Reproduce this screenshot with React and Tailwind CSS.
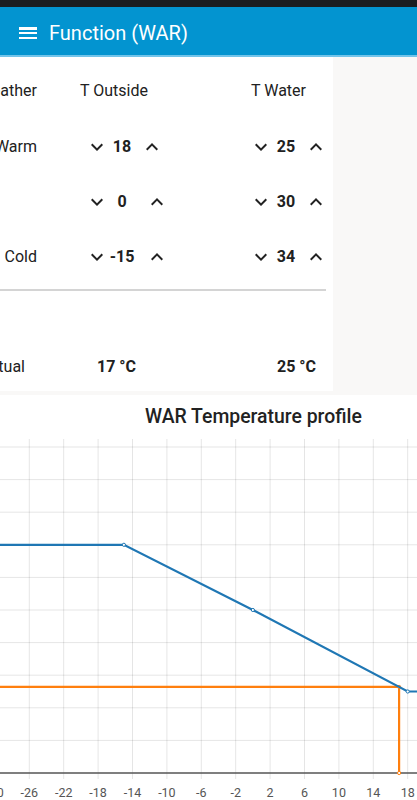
import React from "react";

const ChevDown = () => (
  <svg width="24" height="24" viewBox="0 0 24 24" className="shrink-0">
    <path d="M16.59 8.59L12 13.17 7.41 8.59 6 10l6 6 6-6z" fill="#222" />
  </svg>
);
const ChevUp = () => (
  <svg width="24" height="24" viewBox="0 0 24 24" className="shrink-0">
    <path d="M12 8l-6 6 1.41 1.41L12 10.83l4.59 4.58L18 14z" fill="#222" />
  </svg>
);

const tx = (t) => 29.3 + (t + 26) * 8.6;
const ty = (w) => 334 - (w - 20) * 16.3;

function Chart() {
  const vx = [];
  for (let k = -1; k <= 11; k++) vx.push(29.3 + 34.4 * k);
  const hy = [];
  for (let n = 1; n <= 10; n++) hy.push(334 - 32.6 * n);
  const labels = [-30, -26, -22, -18, -14, -10, -6, -2, 2, 6, 10, 14, 18];
  const blue = [
    [-40, ty(34)],
    [tx(-15), ty(34)],
    [tx(0), ty(30)],
    [tx(18), ty(25)],
    [440, ty(25)],
  ];
  const oy = ty(25.28);
  const ox = tx(17);
  return (
    <svg width="417" height="361" viewBox="0 0 417 361" className="block">
      {vx.map((x, i) => (
        <line key={"v" + i} x1={x} x2={x} y1={0} y2={340} stroke="rgba(0,0,0,0.1)" strokeWidth="1" />
      ))}
      {hy.map((y, i) => (
        <line key={"h" + i} x1={0} x2={417} y1={y} y2={y} stroke="rgba(0,0,0,0.1)" strokeWidth="1" />
      ))}
      <line x1={0} x2={417} y1={334} y2={334} stroke="#555" strokeWidth="1.5" />
      {labels.map((l, i) => (
        <text
          key={"l" + i}
          x={29.3 + 34.4 * (i - 1)}
          y={358}
          textAnchor="middle"
          fontSize="12.5"
          fill="#555"
          fontFamily="Roboto, sans-serif"
        >
          {l}
        </text>
      ))}
      <polyline
        points={`-10,${oy} ${ox},${oy} ${ox},334`}
        fill="none"
        stroke="#ff7f0e"
        strokeWidth="2.2"
      />
      <circle cx={ox} cy={oy} r="1.6" fill="#fff" stroke="#ff7f0e" strokeWidth="1" />
      <circle cx={ox} cy={334} r="1.6" fill="#fff" stroke="#ff7f0e" strokeWidth="1" />
      <polyline
        points={blue.map((p) => p.join(",")).join(" ")}
        fill="none"
        stroke="#1f77b4"
        strokeWidth="2.2"
      />
      {blue.slice(1, 4).map((p, i) => (
        <circle key={"p" + i} cx={p[0]} cy={p[1]} r="1.6" fill="#fff" stroke="#1f77b4" strokeWidth="1" />
      ))}
    </svg>
  );
}

function StepRow({ label, out, water, upGap }) {
  return (
    <div className="flex h-[55px] items-center">
      <div className="flex w-[37px] justify-end whitespace-nowrap">{label}</div>
      <div className="ml-[48px] flex w-[164px] items-center">
        <ChevDown />
        <div className="w-[26px] text-center font-bold">{out}</div>
        <div className={upGap}>
          <ChevUp />
        </div>
      </div>
      <div className="flex items-center">
        <ChevDown />
        <div className="w-[26px] text-center font-bold">{water}</div>
        <div className="ml-[5px]">
          <ChevUp />
        </div>
      </div>
    </div>
  );
}

export default function App() {
  return (
    <div className="h-[800px] w-[417px] overflow-hidden bg-white font-[Roboto,sans-serif] text-[#212121]">
      <div className="h-[7px] bg-[#1b1d20]" />
      <div className="flex h-[48px] items-center gap-[9px] bg-[#0394d0] pl-[16px] pt-[4px] text-white">
        <svg width="24" height="24" viewBox="0 0 24 24" className="shrink-0">
          <path d="M3 18h18v-2H3v2zm0-5h18v-2H3v2zm0-6v2h18V6H3z" fill="#fff" />
        </svg>
        <span className="text-[20px] leading-none">Function (WAR)</span>
      </div>
      <div className="h-[2px] bg-[#72c4ea]" />

      <div className="flex bg-[#f9f8f7] pb-[4px]">
        <div className="h-[334px] w-[333px] bg-white text-[16px]">
          <div className="flex h-[62px] items-center pt-[6px]">
            <div className="flex w-[37px] justify-end whitespace-nowrap">Weather</div>
            <div className="ml-[43px] w-[171px] whitespace-nowrap">T Outside</div>
            <div className="whitespace-nowrap">T Water</div>
          </div>
          <StepRow label="Warm" out="18" water="25" upGap="ml-[5px]" />
          <StepRow label="" out="0" water="30" upGap="ml-[10px]" />
          <StepRow label="Cold" out="-15" water="34" upGap="ml-[10px]" />
          <div className="mt-[5px] h-[2px] w-[326px] bg-[#d4d4d4]" />
          <div className="mt-[52px] flex h-[48px] items-center">
            <div className="flex w-[25px] justify-end whitespace-nowrap">Actual</div>
            <div className="ml-[72px] w-[180px] font-bold">17 °C</div>
            <div className="font-bold">25 °C</div>
          </div>
        </div>
      </div>

      <div className="bg-white">
        <div className="flex h-[44px] items-center pl-[145px] text-[19.4px] font-medium text-[#222]">
          WAR Temperature profile
        </div>
        <Chart />
      </div>
    </div>
  );
}
